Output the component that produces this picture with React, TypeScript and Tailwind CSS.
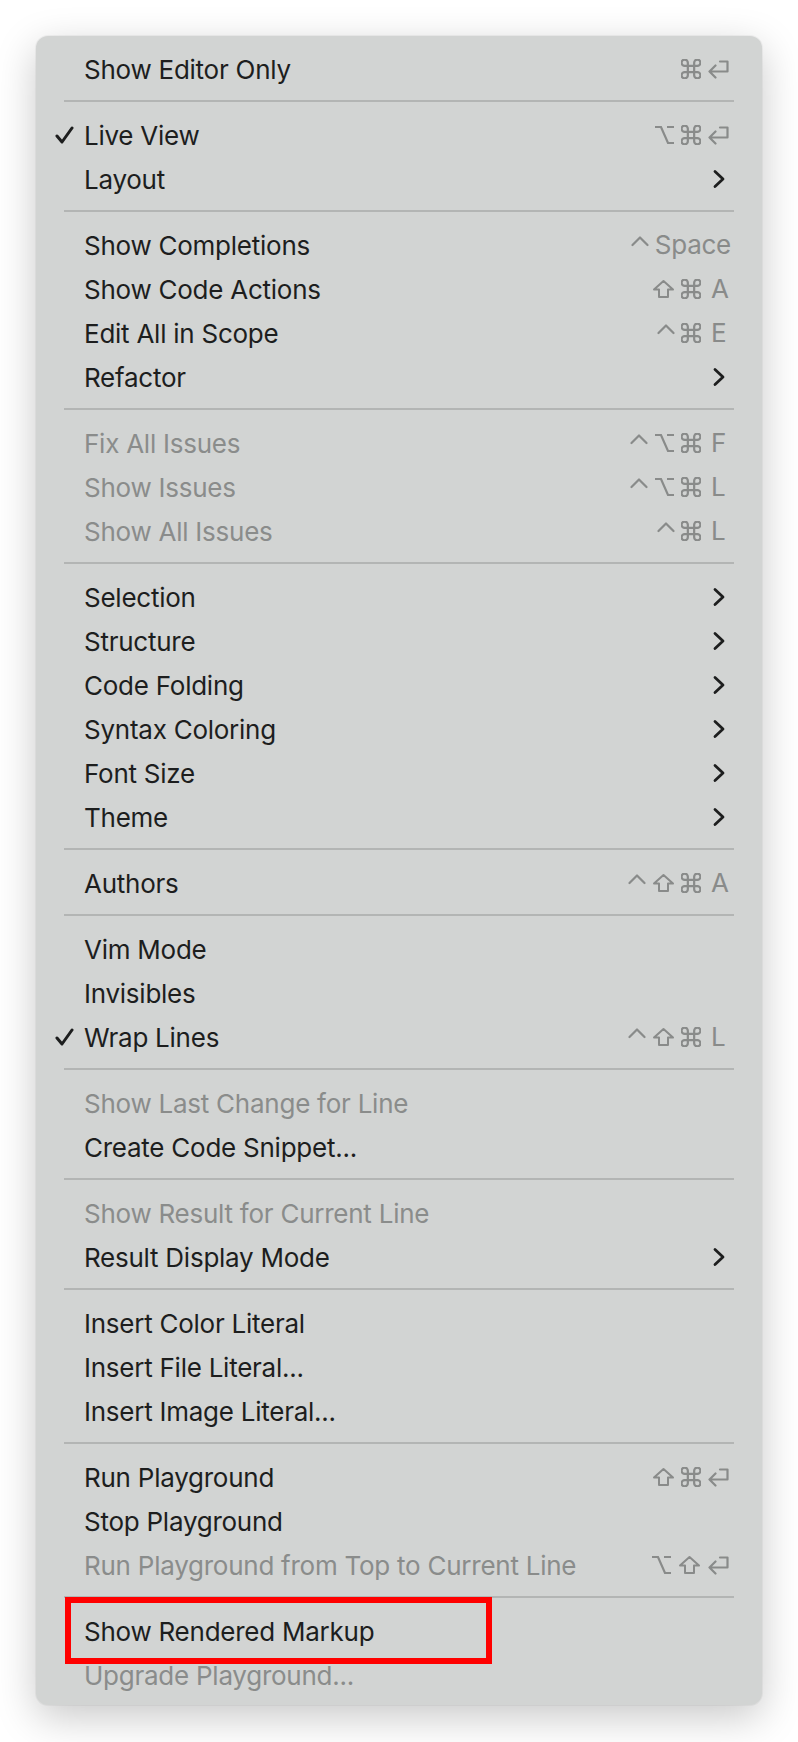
import type { ReactNode } from "react";

type Mod = "ctrl" | "opt" | "shift" | "cmd";

type Entry =
  | "sep"
  | {
      label: string;
      checked?: boolean;
      disabled?: boolean;
      sub?: boolean;
      mods?: Mod[];
      keyName?: string;
      marked?: boolean;
    };

const MENU: Entry[] = [
  { label: "Show Editor Only", mods: ["cmd"], keyName: "return" },
  "sep",
  { label: "Live View", checked: true, mods: ["opt", "cmd"], keyName: "return" },
  { label: "Layout", sub: true },
  "sep",
  { label: "Show Completions", mods: ["ctrl"], keyName: "Space" },
  { label: "Show Code Actions", mods: ["shift", "cmd"], keyName: "A" },
  { label: "Edit All in Scope", mods: ["ctrl", "cmd"], keyName: "E" },
  { label: "Refactor", sub: true },
  "sep",
  { label: "Fix All Issues", disabled: true, mods: ["ctrl", "opt", "cmd"], keyName: "F" },
  { label: "Show Issues", disabled: true, mods: ["ctrl", "opt", "cmd"], keyName: "L" },
  { label: "Show All Issues", disabled: true, mods: ["ctrl", "cmd"], keyName: "L" },
  "sep",
  { label: "Selection", sub: true },
  { label: "Structure", sub: true },
  { label: "Code Folding", sub: true },
  { label: "Syntax Coloring", sub: true },
  { label: "Font Size", sub: true },
  { label: "Theme", sub: true },
  "sep",
  { label: "Authors", mods: ["ctrl", "shift", "cmd"], keyName: "A" },
  "sep",
  { label: "Vim Mode" },
  { label: "Invisibles" },
  { label: "Wrap Lines", checked: true, mods: ["ctrl", "shift", "cmd"], keyName: "L" },
  "sep",
  { label: "Show Last Change for Line", disabled: true },
  { label: "Create Code Snippet..." },
  "sep",
  { label: "Show Result for Current Line", disabled: true },
  { label: "Result Display Mode", sub: true },
  "sep",
  { label: "Insert Color Literal" },
  { label: "Insert File Literal..." },
  { label: "Insert Image Literal..." },
  "sep",
  { label: "Run Playground", mods: ["shift", "cmd"], keyName: "return" },
  { label: "Stop Playground" },
  { label: "Run Playground from Top to Current Line", disabled: true, mods: ["opt", "shift"], keyName: "return" },
  "sep",
  { label: "Show Rendered Markup", marked: true },
  { label: "Upgrade Playground...", disabled: true },
];

// modifier glyphs, drawn to the size they have in the menu
function ModIcon({ mod }: { mod: Mod }) {
  const common = {
    fill: "none",
    stroke: "currentColor",
    strokeWidth: 2.2,
    strokeLinecap: "round" as const,
    strokeLinejoin: "round" as const,
  };
  if (mod === "ctrl")
    return (
      <svg width="18" height="20" viewBox="0 0 18 20" className="shrink-0">
        <path d="M1.5 10 L9 2.5 L16.5 10" {...common} />
      </svg>
    );
  if (mod === "opt")
    return (
      <svg width="21" height="20" viewBox="0 0 21 20" className="shrink-0">
        <path d="M1 2 H7 L14 18 H20 M13 2 H20" {...common} strokeLinecap="butt" strokeLinejoin="miter" />
      </svg>
    );
  if (mod === "shift")
    return (
      <svg width="23" height="20" viewBox="0 0 23 20" className="shrink-0">
        <path d="M11.5 2 L21 10.5 H16 V18 H7 V10.5 H2 Z" {...common} strokeWidth={2} />
      </svg>
    );
  return (
    <svg width="20" height="20" viewBox="2.5 2.5 19 19" className="shrink-0">
      <path
        d="M15 6v12a3 3 0 1 0 3-3H6a3 3 0 1 0 3 3V6a3 3 0 1 0-3 3h12a3 3 0 1 0-3-3"
        {...common}
        strokeWidth={2.1}
      />
    </svg>
  );
}

function ReturnIcon() {
  return (
    <svg width="22" height="20" viewBox="0 0 22 20" className="shrink-0">
      <path
        d="M13 2.5 H20.5 V12.5 H2.5 M8.5 6.5 L2.5 12.5 L8.5 18.5"
        fill="none"
        stroke="currentColor"
        strokeWidth={2.2}
        strokeLinejoin="round"
        strokeLinecap="round"
      />
    </svg>
  );
}

function Shortcut({ mods, keyName }: { mods: Mod[]; keyName: string }) {
  let key: ReactNode;
  if (keyName === "return") key = <ReturnIcon />;
  else if (keyName.length > 1) key = <span className="leading-none">{keyName}</span>;
  else key = <span className="pl-[4px] leading-none">{keyName}</span>;

  return (
    <div className="flex items-center gap-[6px] text-[#898b8a]">
      {mods.map((m, i) => (
        <ModIcon key={i} mod={m} />
      ))}
      <div className="flex min-w-[24px] items-center">{key}</div>
    </div>
  );
}

function Row({ item }: { item: Exclude<Entry, "sep"> }) {
  return (
    <div className="relative flex h-[44px] items-center pr-[31px]">
      <div className="flex w-[48px] shrink-0 items-center pl-[19px]">
        {item.checked && (
          <svg width="19" height="18" viewBox="0 0 19 18" className="text-[#1d1e1e]">
            <path
              d="M2 10 L7 16 L17 2"
              fill="none"
              stroke="currentColor"
              strokeWidth={3}
              strokeLinecap="round"
              strokeLinejoin="round"
            />
          </svg>
        )}
      </div>
      <span className={`flex-1 whitespace-nowrap ${item.disabled ? "text-[#8a8c8b]" : "text-[#1d1e1e]"}`}>
        {item.label}
      </span>
      {item.mods && item.keyName && <Shortcut mods={item.mods} keyName={item.keyName} />}
      {item.sub && (
        <svg width="12" height="20" viewBox="0 0 12 20" className="mr-[6px] text-[#1d1e1e]">
          <path
            d="M2 2.5 L10 10 L2 17.5"
            fill="none"
            stroke="currentColor"
            strokeWidth={2.8}
            strokeLinecap="round"
            strokeLinejoin="round"
          />
        </svg>
      )}
      {item.marked && (
        <div className="pointer-events-none absolute left-[29px] top-[-12px] h-[67px] w-[427px] border-[6px] border-[#ff0000]" />
      )}
    </div>
  );
}

export default function App() {
  return (
    <div className="min-h-[1742px] bg-white pl-[36px] pt-[36px]">
      <div
        className="w-[726px] rounded-[12px] bg-[#d2d4d3] pb-[8px] pt-[11px] text-[26px] tracking-[-0.25px] shadow-[0_12px_40px_rgba(0,0,0,0.22),0_0_0_1px_rgba(0,0,0,0.04)]"
        style={{ fontFamily: "Inter, 'Noto Sans', sans-serif" }}
      >
        {MENU.map((item, i) =>
          item === "sep" ? (
            <div key={i} className="mx-[28px] h-[22px] pt-[9px]">
              <div className="h-[2px] bg-[#b3b5b4]" />
            </div>
          ) : (
            <Row key={i} item={item} />
          ),
        )}
      </div>
    </div>
  );
}
